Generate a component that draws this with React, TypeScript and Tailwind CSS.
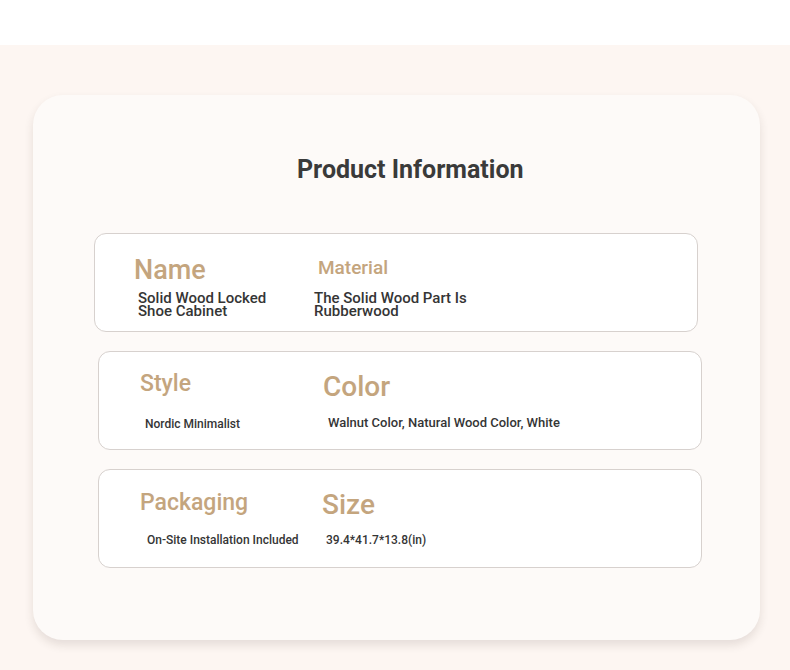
import React from "react";

type Spec = {
  label: string;
  value: string;
  labelClass: string;
  valueClass: string;
  colClass: string;
};

function Cell({ label, value, labelClass, valueClass, colClass }: Spec) {
  return (
    <div className={`flex flex-col ${colClass}`}>
      <div className={`font-medium leading-none text-[#c4a57e] ${labelClass}`}>{label}</div>
      <div className={`font-medium text-[#353535] ${valueClass}`}>{value}</div>
    </div>
  );
}

export default function App() {
  return (
    <div className="w-[790px] h-[670px] bg-[#fdf6f2] font-['Roboto','Liberation_Sans',sans-serif] overflow-hidden">
      {/* top strip */}
      <div className="h-[45px] bg-white" />

      <div className="ml-[33px] mt-[50px] w-[727px] h-[545px] rounded-[30px] bg-[#fdfaf8] shadow-[0_5px_10px_rgba(60,40,30,0.12)] flex flex-col items-start">
        <h1 className="mt-[60px] ml-[264px] text-[25px] leading-[30px] font-bold text-[#3a3a3a]">
          Product Information
        </h1>

        {/* Name / Material */}
        <div className="mt-[48px] ml-[61px] w-[604px] h-[99px] rounded-[12px] border border-[#d7d1ce] bg-white flex">
          <Cell
            label="Name"
            value="Solid Wood Locked Shoe Cabinet"
            colClass="pl-[39px] pt-[23px] w-[219px]"
            labelClass="text-[27px]"
            valueClass="mt-[8px] ml-[4px] text-[15px] leading-[13px] w-[150px]"
          />
          <Cell
            label="Material"
            value="The Solid Wood Part Is Rubberwood"
            colClass="pt-[24px]"
            labelClass="text-[19px] ml-[4px]"
            valueClass="mt-[15px] text-[15px] leading-[13px] w-[180px]"
          />
        </div>

        {/* Style / Color */}
        <div className="mt-[19px] ml-[65px] w-[604px] h-[99px] rounded-[12px] border border-[#d7d1ce] bg-white flex">
          <Cell
            label="Style"
            value="Nordic Minimalist"
            colClass="pl-[41px] pt-[20px] w-[224px]"
            labelClass="text-[23px]"
            valueClass="mt-[22px] ml-[5px] text-[12px] leading-[14px]"
          />
          <Cell
            label="Color"
            value="Walnut Color, Natural Wood Color, White"
            colClass="pt-[21px]"
            labelClass="text-[28px]"
            valueClass="mt-[15px] ml-[5px] text-[13px] leading-[14px]"
          />
        </div>

        {/* Packaging / Size */}
        <div className="mt-[19px] ml-[65px] w-[604px] h-[99px] rounded-[12px] border border-[#d7d1ce] bg-white flex">
          <Cell
            label="Packaging"
            value="On-Site Installation Included"
            colClass="pl-[41px] pt-[21px] w-[223px]"
            labelClass="text-[23px]"
            valueClass="mt-[19px] ml-[7px] text-[12px] leading-[14px]"
          />
          <Cell
            label="Size"
            value="39.4*41.7*13.8(in)"
            colClass="pt-[21px]"
            labelClass="text-[28px]"
            valueClass="mt-[14px] ml-[4px] text-[12px] leading-[14px]"
          />
        </div>
      </div>
    </div>
  );
}
